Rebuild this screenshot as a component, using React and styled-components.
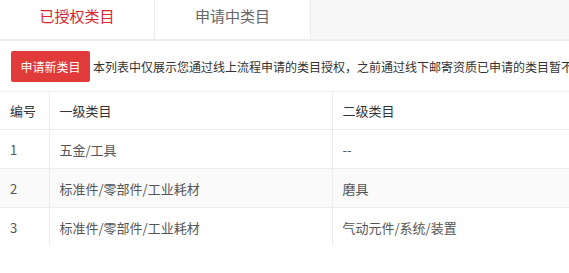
import React, { useState } from "react";
import styled, { createGlobalStyle } from "styled-components";

const GlobalStyle = createGlobalStyle`
  html, body {
    margin: 0;
    padding: 0;
    background: #fff;
  }
  body {
    font-family: "Noto Sans CJK SC", "Noto Sans", sans-serif;
    color: #333;
  }
`;

const Page = styled.div`
  width: 569px;
  overflow: hidden;
`;

const TabBar = styled.div`
  display: flex;
  height: 39px;
  background: #f7f7f7;
  border-bottom: 2px solid #eeeeee;
`;

const Tab = styled.div`
  width: ${(props) => props.$width}px;
  flex: none;
  display: flex;
  justify-content: center;
  padding-top: 3px;
  line-height: 25px;
  box-sizing: border-box;
  background: #fff;
  border-right: 1px solid #ececec;
  font-size: 15px;
  color: ${(props) => (props.$active ? "#d7262e" : "#666")};
  cursor: pointer;
`;

const Content = styled.div`
  padding: 10px 0 0;
`;

const Toolbar = styled.div`
  display: flex;
  align-items: center;
  padding-left: 11px;
  white-space: nowrap;
`;

const Button = styled.button`
  flex: none;
  width: 79px;
  height: 31px;
  border: none;
  border-radius: 2px;
  background: #e03a3a;
  color: #fff;
  font-family: inherit;
  font-size: 12px;
  padding: 0;
  cursor: pointer;
`;

const Notice = styled.span`
  margin-left: 3px;
  font-size: 12px;
  color: #333;
`;

const Table = styled.table`
  margin-top: 9px;
  width: 100%;
  border-collapse: collapse;
  table-layout: fixed;
  font-size: 13px;
  th,
  td {
    text-align: left;
    padding: 0 10px;
    border-top: 1px solid #ececec;
    border-left: 1px solid #ececec;
    font-weight: normal;
  }
  th:first-child,
  td:first-child {
    border-left: none;
  }
  th {
    height: 37px;
    color: #333;
  }
  td {
    height: 38px;
    color: #555;
  }
  tbody tr:nth-child(even) td {
    background: #fafafa;
  }
`;

const tabs = [
  { label: "已授权类目", width: 155 },
  { label: "申请中类目", width: 156 },
];

const rows = [
  { id: 1, first: "五金/工具", second: "--" },
  { id: 2, first: "标准件/零部件/工业耗材", second: "磨具" },
  { id: 3, first: "标准件/零部件/工业耗材", second: "气动元件/系统/装置" },
];

export default function App() {
  const [tab, setTab] = useState(0);
  return (
    <Page>
      <GlobalStyle />
      <TabBar>
        {tabs.map((t, i) => (
          <Tab
            key={t.label}
            $width={t.width}
            $active={tab === i}
            onClick={() => setTab(i)}
          >
            {t.label}
          </Tab>
        ))}
      </TabBar>
      <Content>
        <Toolbar>
          <Button>申请新类目</Button>
          <Notice>
            本列表中仅展示您通过线上流程申请的类目授权，之前通过线下邮寄资质已申请的类目暂不展示
          </Notice>
        </Toolbar>
        <Table>
          <colgroup>
            <col width="49" />
            <col width="283" />
            <col />
          </colgroup>
          <thead>
            <tr>
              <th>编号</th>
              <th>一级类目</th>
              <th>二级类目</th>
            </tr>
          </thead>
          <tbody>
            {rows.map((r) => (
              <tr key={r.id}>
                <td>{r.id}</td>
                <td>{r.first}</td>
                <td>{r.second}</td>
              </tr>
            ))}
          </tbody>
        </Table>
      </Content>
    </Page>
  );
}
